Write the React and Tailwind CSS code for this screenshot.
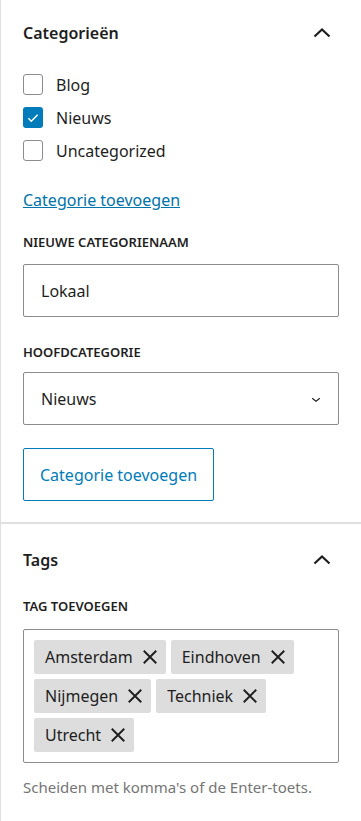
import React from "react";

const font = { fontFamily: '"Noto Sans", "Open Sans", sans-serif' };

function ChevronUp() {
  return (
    <svg width="24" height="24" viewBox="0 0 24 24" className="mr-[5px]">
      <path d="M4.5 15.5L12 8.5l7.5 7" stroke="#1e1e1e" strokeWidth="2.2" fill="none" />
    </svg>
  );
}

function ChevronDown() {
  return (
    <svg width="18" height="18" viewBox="0 0 24 24" className="text-[#1e1e1e]">
      <path d="M17.5 11.6L12 16l-5.5-4.4.9-1.2L12 14l4.6-3.6.9 1.2z" fill="currentColor" />
    </svg>
  );
}

function Checkbox({ label, checked }) {
  return (
    <label className="flex items-center gap-[13px] h-[33px]">
      <span
        className={
          checked
            ? "w-[20px] h-[21px] rounded-[3px] bg-[#007cba] flex items-center justify-center"
            : "w-[20px] h-[21px] rounded-[3px] border border-[#8c8c8c] bg-white"
        }
      >
        {checked && (
          <svg width="14" height="14" viewBox="0 0 24 24">
            <path d="M4 12.5l5 5L20 6.5" stroke="white" strokeWidth="2.6" fill="none" />
          </svg>
        )}
      </span>
      <span className="text-[16px] text-[#1e1e1e]">{label}</span>
    </label>
  );
}

function Tag({ name }) {
  return (
    <span className="flex items-center h-[34px] bg-[#dddddd] rounded-[2px] pl-[11px] pr-[6px] gap-[7px] text-[16px] text-[#1e1e1e]">
      {name}
      <svg width="20" height="20" viewBox="0 0 24 24">
        <path d="M4.5 4.5l15 15M19.5 4.5l-15 15" stroke="#1e1e1e" strokeWidth="2.3" />
      </svg>
    </span>
  );
}

export default function App() {
  return (
    <div style={font} className="w-[361px] min-h-[821px] bg-white border-l border-[#e0e0e0]">
      {/* Categorieën */}
      <div className="px-[22px] pt-[18px] pb-[21px]">
        <div className="flex items-center justify-between h-[30px]">
          <h2 className="text-[16px] font-semibold text-[#1e1e1e]">Categorieën</h2>
          <ChevronUp />
        </div>
        <div className="mt-[20px] flex flex-col">
          <Checkbox label="Blog" />
          <Checkbox label="Nieuws" checked />
          <Checkbox label="Uncategorized" />
        </div>
        <a href="#" className="block mt-[20px] text-[16px] text-[#0073aa] underline leading-[26px]">
          Categorie toevoegen
        </a>
        <div className="mt-[19px] text-[13px] font-semibold uppercase text-[#1e1e1e] leading-[20px]">
          Nieuwe categorienaam
        </div>
        <div className="mt-[12px] h-[53px] border border-[#8c8c8c] rounded-[2px] flex items-center px-[17px] text-[16px] text-[#1e1e1e]">
          Lokaal
        </div>
        <div className="mt-[25px] text-[13px] font-semibold uppercase text-[#1e1e1e] leading-[20px]">
          Hoofdcategorie
        </div>
        <div className="mt-[10px] h-[53px] border border-[#8c8c8c] rounded-[2px] flex items-center justify-between pl-[17px] pr-[13px] text-[16px] text-[#1e1e1e]">
          Nieuws
          <ChevronDown />
        </div>
        <button className="mt-[23px] h-[53px] px-[16px] border border-[#007cba] rounded-[2px] text-[16px] text-[#007cba] bg-white">
          Categorie toevoegen
        </button>
      </div>
      <div className="h-[2px] bg-[#e0e0e0]" />
      {/* Tags */}
      <div className="px-[22px] pt-[21px] pb-[24px]">
        <div className="flex items-center justify-between h-[30px]">
          <h2 className="text-[16px] font-semibold text-[#1e1e1e]">Tags</h2>
          <ChevronUp />
        </div>
        <div className="mt-[21px] text-[13px] font-semibold uppercase text-[#1e1e1e] leading-[20px]">
          Tag toevoegen
        </div>
        <div className="mt-[13px] border border-[#8c8c8c] rounded-[2px] p-[10px] flex flex-wrap gap-x-[5px] gap-y-[5px]">
          {["Amsterdam", "Eindhoven", "Nijmegen", "Techniek", "Utrecht"].map((t) => (
            <Tag key={t} name={t} />
          ))}
        </div>
        <p className="mt-[13px] text-[15px] text-[#757575]">Scheiden met komma's of de Enter-toets.</p>
      </div>
    </div>
  );
}
